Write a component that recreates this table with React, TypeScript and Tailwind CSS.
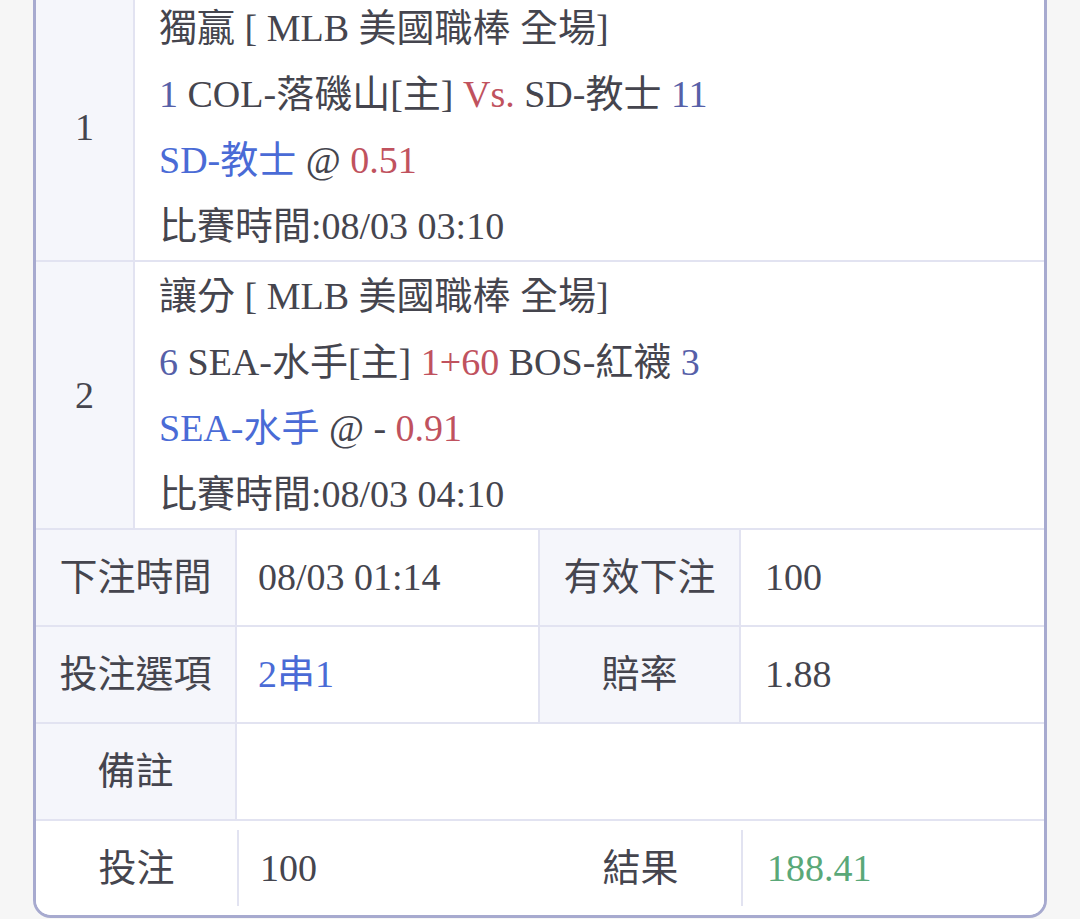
import React from "react";

const FONT = "font-['Liberation_Serif','Noto_Sans_CJK_TC',serif]";

const gray = "text-[#45454e]";
const navy = "text-[#5660a8]";
const blue = "text-[#4a6bd6]";
const red = "text-[#c0525e]";
const green = "text-[#5aa878]";

function MatchRow({
  no,
  lines,
}: {
  no: string;
  lines: React.ReactNode[];
}) {
  return (
    <div className="flex border-b-2 border-[#e2e3f1]">
      <div className="w-[99px] shrink-0 flex items-center justify-center bg-[#f5f6fb] border-r-2 border-[#e2e3f1]">
        {no}
      </div>
      <div className="flex-1 bg-white pl-[24px] py-[1px] leading-[66px]">
        {lines.map((l, i) => (
          <div key={i} className="whitespace-nowrap">
            {l}
          </div>
        ))}
      </div>
    </div>
  );
}

export default function App() {
  return (
    <div className={`min-h-[919px] bg-[#f6f6f6] px-[33px] ${FONT} ${gray} text-[38px] overflow-hidden`}>
      <div className="mt-[-9px] border-[3px] border-[#a7aacf] rounded-b-[18px] overflow-hidden bg-white">
        <MatchRow
          no="1"
          lines={[
            <span>獨贏 [ MLB 美國職棒 全場]</span>,
            <span>
              <span className={navy}>1</span> COL-落磯山[主] <span className={red}>Vs.</span> SD-教士{" "}
              <span className={navy}>11</span>
            </span>,
            <span>
              <span className={blue}>SD-教士</span> @ <span className={red}>0.51</span>
            </span>,
            <span>比賽時間:08/03 03:10</span>,
          ]}
        />
        <MatchRow
          no="2"
          lines={[
            <span>讓分 [ MLB 美國職棒 全場]</span>,
            <span>
              <span className={navy}>6</span> SEA-水手[主] <span className={red}>1+60</span> BOS-紅襪{" "}
              <span className={navy}>3</span>
            </span>,
            <span>
              <span className={blue}>SEA-水手</span> @ - <span className={red}>0.91</span>
            </span>,
            <span>比賽時間:08/03 04:10</span>,
          ]}
        />

        <div className="grid grid-cols-[201px_1fr_201px_1fr]">
          {/* row 1 */}
          <div className="h-[97px] flex items-center justify-center bg-[#f5f6fb] border-r-2 border-b-2 border-[#e2e3f1]">
            下注時間
          </div>
          <div className="h-[97px] flex items-center pl-[21px] bg-white border-r-2 border-b-2 border-[#e2e3f1]">
            08/03 01:14
          </div>
          <div className="h-[97px] flex items-center justify-center bg-[#f5f6fb] border-r-2 border-b-2 border-[#e2e3f1]">
            有效下注
          </div>
          <div className="h-[97px] flex items-center pl-[24px] bg-white border-b-2 border-[#e2e3f1]">
            100
          </div>

          {/* row 2 */}
          <div className="h-[97px] flex items-center justify-center bg-[#f5f6fb] border-r-2 border-b-2 border-[#e2e3f1]">
            投注選項
          </div>
          <div className={`h-[97px] flex items-center pl-[21px] bg-white border-r-2 border-b-2 border-[#e2e3f1] ${blue}`}>
            2串1
          </div>
          <div className="h-[97px] flex items-center justify-center bg-[#f5f6fb] border-r-2 border-b-2 border-[#e2e3f1]">
            賠率
          </div>
          <div className="h-[97px] flex items-center pl-[24px] bg-white border-b-2 border-[#e2e3f1]">
            1.88
          </div>

          {/* row 3 */}
          <div className="h-[97px] flex items-center justify-center bg-[#f5f6fb] border-r-2 border-b-2 border-[#e2e3f1]">
            備註
          </div>
          <div className="col-span-3 h-[97px] bg-white border-b-2 border-[#e2e3f1]"></div>

          {/* row 4 */}
          <div className="h-[94px] flex items-center justify-center bg-white">投注</div>
          <div className="h-[94px] flex items-center bg-white">
            <div className="w-[2px] h-[76px] bg-[#e2e3f1]" />
            <span className="pl-[21px]">100</span>
          </div>
          <div className="h-[94px] flex items-center justify-center bg-white">結果</div>
          <div className="h-[94px] flex items-center bg-white">
            <div className="w-[2px] h-[76px] bg-[#e2e3f1]" />
            <span className={`pl-[24px] ${green}`}>188.41</span>
          </div>
        </div>
      </div>
    </div>
  );
}
